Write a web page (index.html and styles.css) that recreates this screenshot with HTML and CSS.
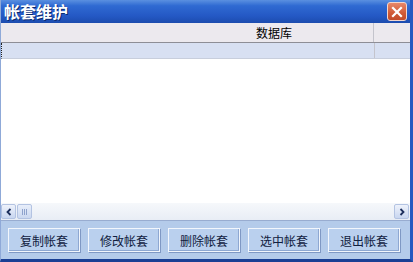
FILE: index.html
```html
<!doctype html>
<html lang="zh">

<head>
    <title>帐套维护</title>
    <link rel="stylesheet" href="styles.css">
</head>

<body>
    <div class="window">
        <div class="titlebar">
            <span class="title">帐套维护</span>
            <button class="close" title="关闭">
                <svg width="12" height="12" viewBox="0 0 12 12">
                    <path d="M2 2 L10 10 M10 2 L2 10" stroke="#fff" stroke-width="2.2" stroke-linecap="square" />
                </svg>
            </button>
        </div>

        <div class="grid">
            <div class="grid-head">
                <div class="cell-main">数据库</div>
                <div class="cell-rest"></div>
            </div>
            <div class="grid-row">
                <div class="cell-main"></div>
                <div class="cell-rest"></div>
            </div>
            <div class="grid-body"></div>
            <div class="hscroll">
                <div class="arrow">
                    <svg width="8" height="8" viewBox="0 0 8 8">
                        <path d="M5.5 1 L2.5 4 L5.5 7" stroke="#1c2e5c" stroke-width="1.8" fill="none" />
                    </svg>
                </div>
                <div class="thumb"><span></span><span></span><span></span></div>
                <div class="track"></div>
                <div class="arrow">
                    <svg width="8" height="8" viewBox="0 0 8 8">
                        <path d="M2.5 1 L5.5 4 L2.5 7" stroke="#1c2e5c" stroke-width="1.8" fill="none" />
                    </svg>
                </div>
            </div>
        </div>

        <div class="actions">
            <button class="btn">复制帐套</button>
            <button class="btn">修改帐套</button>
            <button class="btn">删除帐套</button>
            <button class="btn">选中帐套</button>
            <button class="btn">退出帐套</button>
        </div>
    </div>
</body>

</html>
```

FILE: styles.css
```css
body {
    margin: 0;
    padding: 0;
    font-family: "Noto Sans CJK SC", "Noto Sans", sans-serif;
    background-color: #ffffff;
}

.window {
    width: 413px;
    height: 262px;
    display: flex;
    flex-direction: column;
    background-color: #b4cbea;
    border-right: 3px solid #2458c0;
    border-bottom: 3px solid #1a3f94;
    border-left: 1px solid #8fa9d8;
    box-sizing: border-box;
}

.titlebar {
    height: 23px;
    display: flex;
    align-items: center;
    justify-content: space-between;
    padding: 0 3px 0 3px;
    background: linear-gradient(#5a90e0 0%, #2f6ad2 25%, #2458c4 70%, #1c4cae 100%);
}

.title {
    color: #ffffff;
    font-size: 16px;
    font-weight: bold;
    text-shadow: 1px 1px 0 #0b2a6e;
    line-height: 23px;
}

.close {
    width: 20px;
    height: 19px;
    padding: 0;
    border: 1px solid #f3d6cc;
    border-radius: 3px;
    background: linear-gradient(#e8886a, #d05a36 60%, #c24c2a);
    display: flex;
    align-items: center;
    justify-content: center;
}

.grid {
    flex: 1;
    display: flex;
    flex-direction: column;
    background-color: #ffffff;
}

.grid-head,
.grid-row {
    display: flex;
}

.grid-head {
    height: 19px;
    background-color: #ece9ee;
    border-bottom: 1px solid #8e8e96;
    font-size: 12px;
    line-height: 19px;
    color: #000000;
}

.grid-row {
    height: 15px;
    background-color: #d8e0f2;
    border-bottom: 1px solid #c8cedc;
    border-left: 1px dotted #222222;
}

.cell-main {
    width: 373px;
    border-right: 1px solid #c4c4cc;
    box-sizing: border-box;
    padding-left: 174px;
    text-align: center;
}

.cell-rest {
    flex: 1;
}

.grid-body {
    flex: 1;
}

.hscroll {
    height: 17px;
    display: flex;
    align-items: center;
    padding: 0 1px 0 0;
    background: linear-gradient(#f6f8fb, #e8edf5);
    border-bottom: 1px solid #98acd0;
}

.arrow {
    width: 15px;
    height: 15px;
    display: flex;
    align-items: center;
    justify-content: center;
    border: 1px solid #b3c3e2;
    border-radius: 2px;
    background: linear-gradient(#eef2fb, #c8d6f0);
    box-sizing: border-box;
}

.thumb {
    width: 15px;
    height: 15px;
    margin-left: 1px;
    display: flex;
    gap: 1px;
    align-items: center;
    justify-content: center;
    border: 1px solid #b3c3e2;
    border-radius: 2px;
    background: linear-gradient(#e8eefa, #cbd8f0);
    box-sizing: border-box;
}

.thumb span {
    width: 1px;
    height: 6px;
    background-color: #8ea2cc;
}

.track {
    flex: 1;
}

.actions {
    height: 38px;
    display: flex;
    align-items: center;
    gap: 8px;
    padding-left: 7px;
    box-sizing: border-box;
}

.btn {
    width: 72px;
    height: 24px;
    padding: 0;
    font-family: "Noto Sans CJK SC", sans-serif;
    font-size: 12px;
    color: #102040;
    background-color: #bad0ee;
    border: 1px solid #f2f6fc;
    box-shadow: inset -1px -1px 0 #8ea8d2, 1px 1px 0 #7f98c4;
}
```
